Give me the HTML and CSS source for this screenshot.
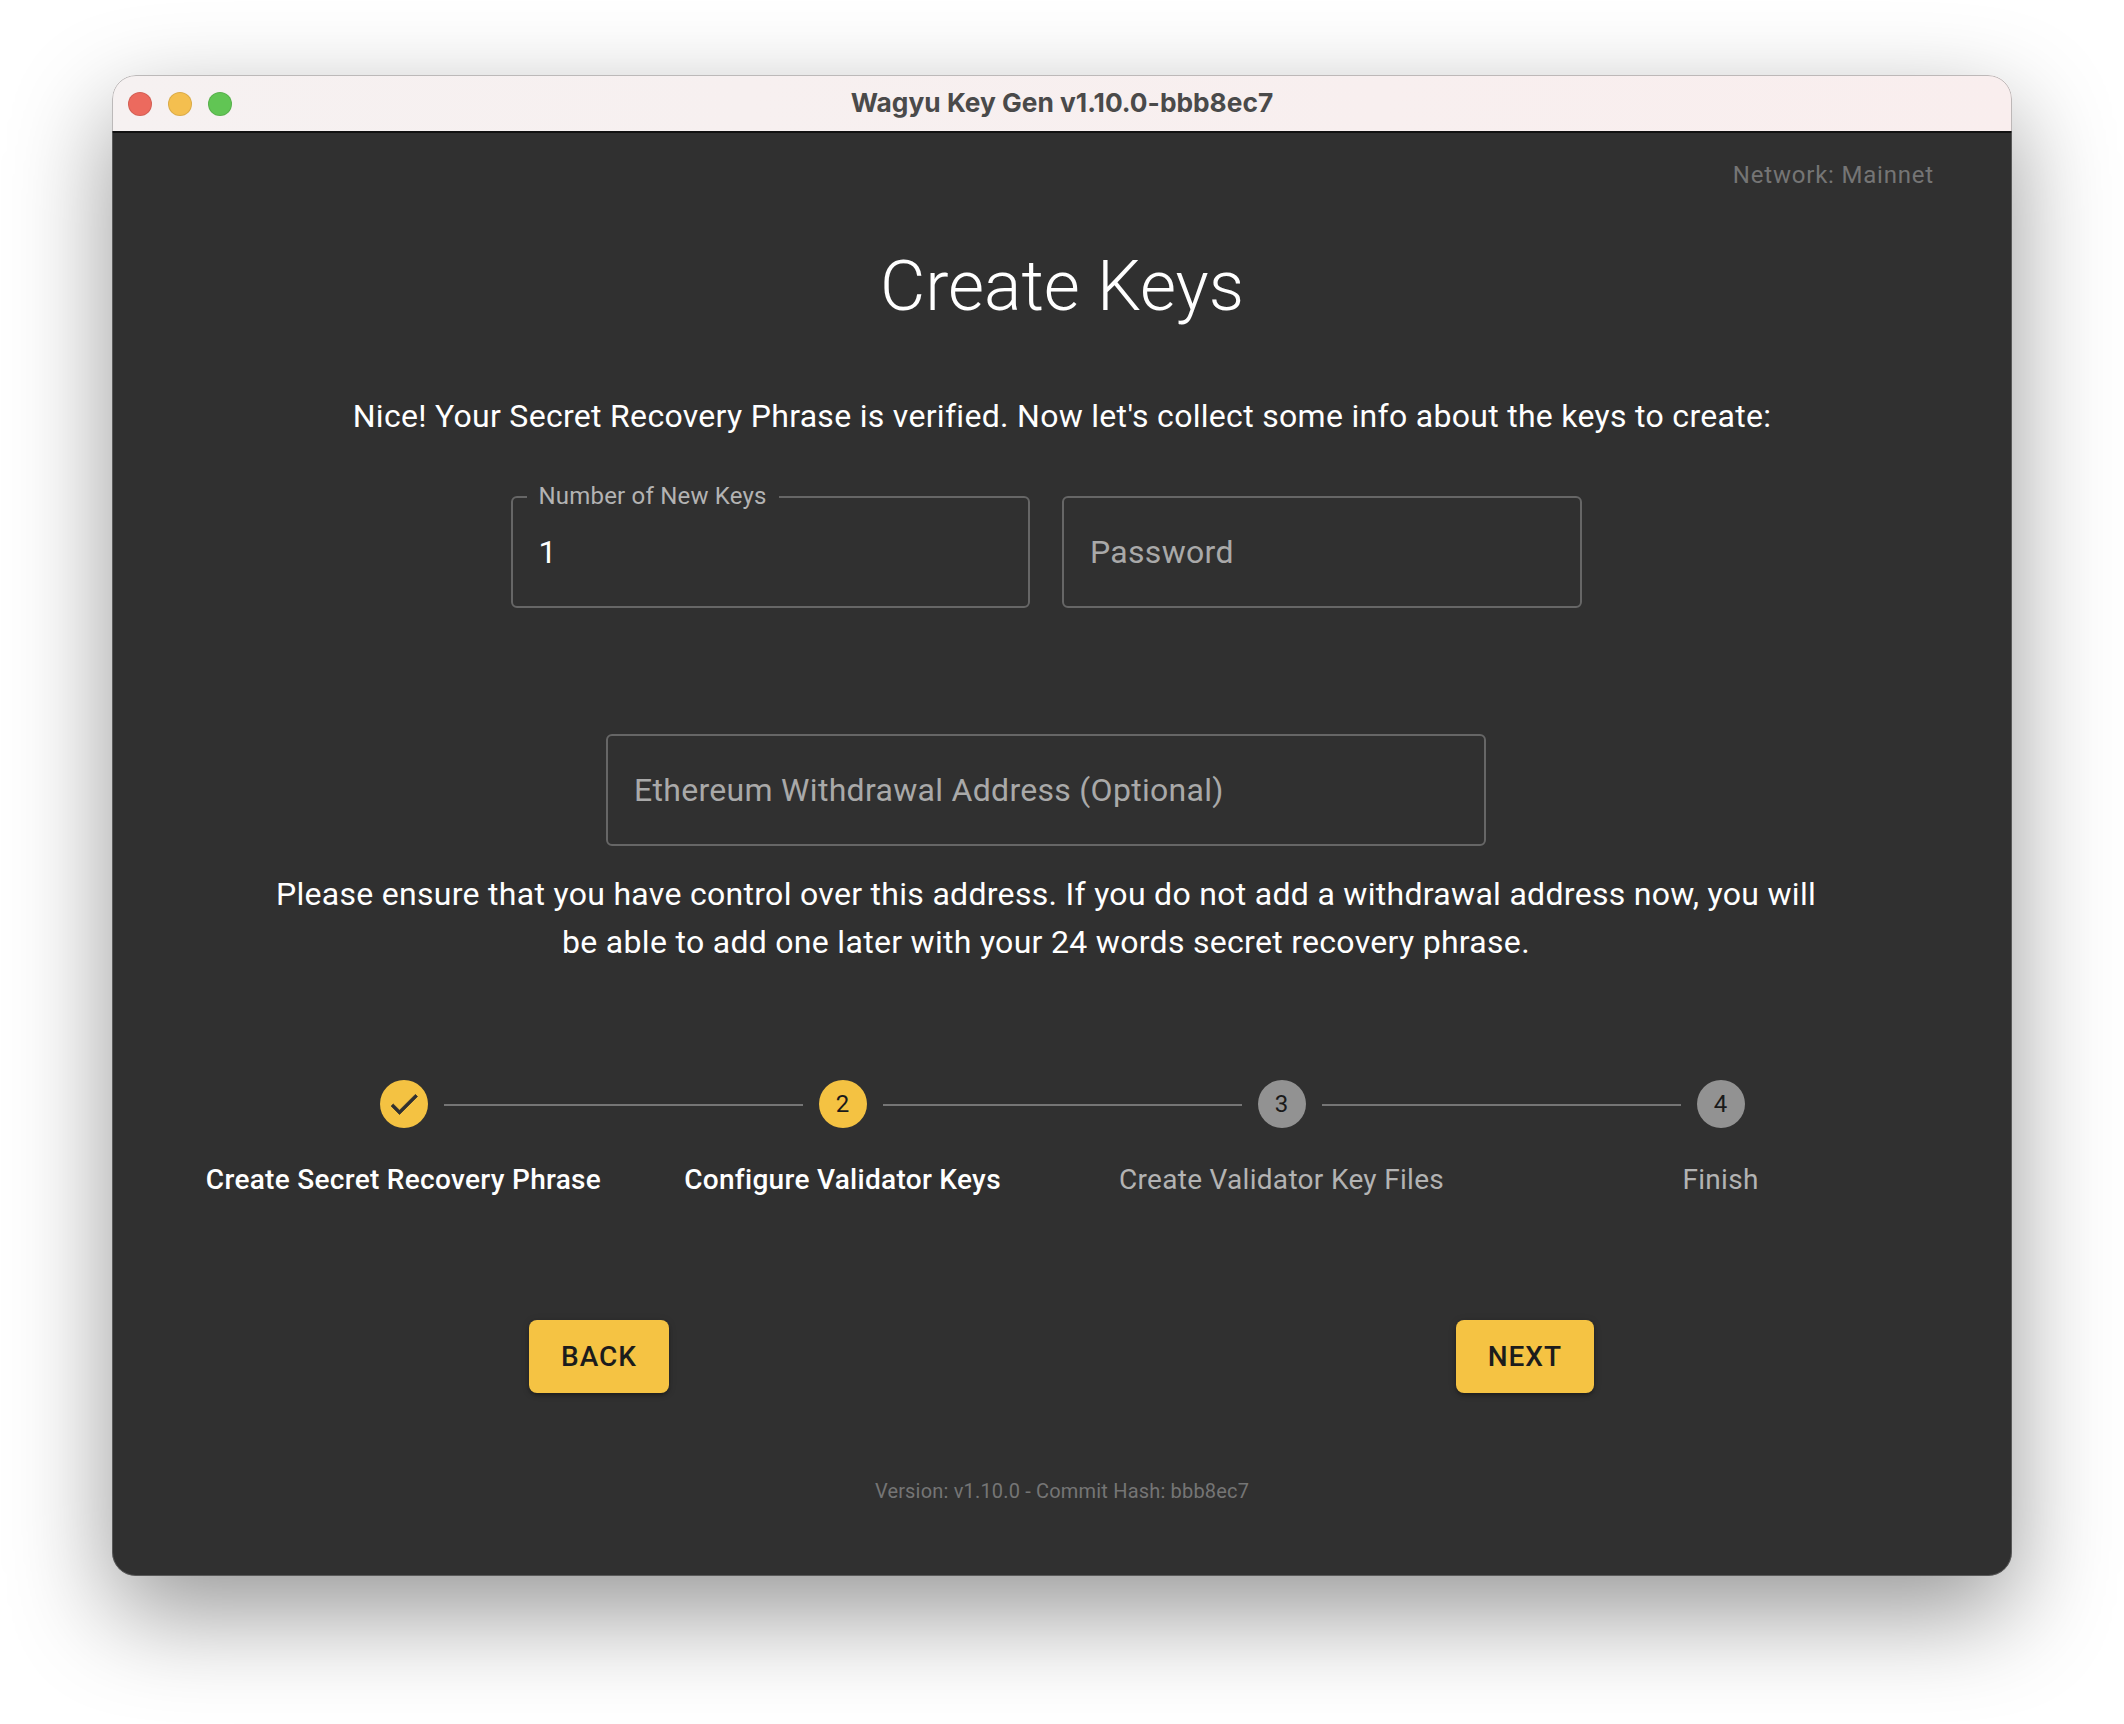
FILE: index.html
```html
<!DOCTYPE html>
<html lang="en">
<head>
<meta charset="utf-8">
<title>Wagyu Key Gen</title>
<link rel="stylesheet" href="styles.css">
</head>
<body>
<div class="window">
  <header class="titlebar">
    <div class="lights">
      <span class="light red"></span>
      <span class="light yellow"></span>
      <span class="light green"></span>
    </div>
    <div class="wintitle">Wagyu Key Gen v1.10.0-bbb8ec7</div>
  </header>
  <main class="app">
    <div class="network">Network: Mainnet</div>
    <h1 class="heading">Create Keys</h1>
    <p class="intro">Nice! Your Secret Recovery Phrase is verified. Now let's collect some info about the keys to create:</p>
    <div class="field-row">
      <div class="field narrow">
        <span class="legend">Number of New Keys</span>
        <span class="value">1</span>
      </div>
      <div class="field narrow">
        <span class="placeholder">Password</span>
      </div>
    </div>
    <div class="field wide">
      <span class="placeholder">Ethereum Withdrawal Address (Optional)</span>
    </div>
    <p class="note">Please ensure that you have control over this address. If you do not add a withdrawal address now, you will<br>be able to add one later with your 24 words secret recovery phrase.</p>
    <div class="stepper">
      <div class="step active">
        <span class="dot on"><svg class="check" viewBox="0 0 24 24"><path d="M9 16.17 4.83 12l-1.42 1.41L9 19 21 7l-1.41-1.41z"/></svg></span>
        <span class="step-label">Create Secret Recovery Phrase</span>
      </div>
      <div class="step active link">
        <span class="dot on">2</span>
        <span class="step-label">Configure Validator Keys</span>
      </div>
      <div class="step link">
        <span class="dot">3</span>
        <span class="step-label">Create Validator Key Files</span>
      </div>
      <div class="step link">
        <span class="dot">4</span>
        <span class="step-label">Finish</span>
      </div>
    </div>
    <div class="actions">
      <button class="btn">BACK</button>
      <button class="btn">NEXT</button>
    </div>
    <footer class="version">Version: v1.10.0 - Commit Hash: bbb8ec7</footer>
  </main>
</div>
</body>
</html>
```

FILE: styles.css
```css
* { box-sizing: border-box; }
html, body { margin: 0; padding: 0; }
body {
  width: 2124px;
  height: 1724px;
  background: #fff;
  padding: 75px 112px 148px;
  font-family: Roboto, "Noto Sans", sans-serif;
  overflow: hidden;
}
.window {
  position: relative;
  width: 1900px;
  height: 1501px;
  border-radius: 24px;
  overflow: hidden;
  display: flex;
  flex-direction: column;
  box-shadow: 0 37px 100px rgba(0,0,0,.41);
}
.window::after {
  content: "";
  position: absolute;
  inset: 0;
  border: 1px solid rgba(130,130,130,.5);
  border-radius: 24px;
  pointer-events: none;
}
.titlebar {
  height: 58px;
  flex: none;
  background: linear-gradient(90deg, #f6f1f1, #f9eeee);
  border-bottom: 2px solid #111;
  display: flex;
  align-items: center;
  justify-content: center;
  position: relative;
}
.lights {
  position: absolute;
  left: 16px;
  top: 17px;
  display: flex;
  gap: 16px;
}
.light {
  width: 24px;
  height: 24px;
  border-radius: 50%;
  border: 1px solid rgba(0,0,0,.1);
}
.red { background: #ec6a5e; }
.yellow { background: #f4bf4f; }
.green { background: #61c554; }
.wintitle {
  font-family: Inter, sans-serif;
  font-weight: 700;
  font-size: 26.3px;
  color: #4a4a4a;
  margin-top: -1px;
}
.app {
  flex: 1;
  background: #303030;
  color: #fff;
  display: flex;
  flex-direction: column;
  align-items: center;
  padding: 0 72px;
  position: relative;
}
.network {
  position: absolute;
  top: 28px;
  right: 78px;
  font-size: 24px;
  letter-spacing: .8px;
  color: #757575;
}
.heading {
  margin: 111px 0 0;
  font-size: 69.7px;
  line-height: 84px;
  font-weight: 300;
}
.intro {
  margin: 64px 0 0;
  font-size: 32px;
  line-height: 48px;
  letter-spacing: .3px;
}
.field-row {
  display: flex;
  gap: 32px;
  margin: 56px 0 0 -32px;
}
.field {
  position: relative;
  height: 112px;
  border: 2px solid #666;
  border-radius: 6px;
  display: flex;
  align-items: center;
  padding: 0 26px;
  font-size: 32px;
  letter-spacing: .3px;
}
.narrow { width: 519.5px; }
.wide { width: 880px; margin: 126px 32px 0 0; }
.legend {
  position: absolute;
  left: 14px;
  top: -16px;
  padding: 0 12px;
  background: #303030;
  font-size: 24px;
  line-height: 28px;
  color: #b3b3b3;
  letter-spacing: .2px;
}
.value { color: #fff; }
.placeholder { color: #a9a9a9; }
.note {
  margin: 24px 32px 0 0;
  text-align: center;
  font-size: 32px;
  line-height: 48px;
  letter-spacing: .3px;
}
.stepper {
  display: grid;
  grid-template-columns: repeat(4, 439px);
  margin-top: 114px;
  width: 1756px;
}
.step {
  position: relative;
  display: flex;
  flex-direction: column;
  align-items: center;
}
.link::before {
  content: "";
  position: absolute;
  top: 24px;
  left: calc(-50% + 40px);
  right: calc(50% + 40px);
  border-top: 2px solid #757575;
}
.dot {
  width: 48px;
  height: 48px;
  border-radius: 50%;
  background: #929292;
  color: #1a1a1a;
  font-size: 24px;
  display: flex;
  align-items: center;
  justify-content: center;
}
.dot.on { background: #f4c242; }
.check { width: 36px; height: 36px; fill: #303030; stroke: #303030; stroke-width: .5; }
.step-label {
  margin-top: 38px;
  font-size: 28px;
  line-height: 28px;
  letter-spacing: .3px;
  color: #b3b3b3;
}
.active .step-label { color: #fff; font-weight: 500; }
.actions {
  width: 1756px;
  display: flex;
  justify-content: space-between;
  padding: 0 346px 0 345px;
  margin-top: 126px;
}
.btn {
  border: 0;
  height: 73px;
  padding: 0 32px;
  background: #f5c343;
  color: #1c1c1c;
  font-family: Roboto, sans-serif;
  font-weight: 500;
  font-size: 28px;
  letter-spacing: .95px;
  border-radius: 8px;
  box-shadow: 0 3px 3px -1px rgba(0,0,0,.2), 0 2px 4px rgba(0,0,0,.14), 0 1px 8px rgba(0,0,0,.12);
}
.version {
  margin-top: 86px;
  font-size: 20px;
  letter-spacing: .18px;
  color: #757575;
}
```
